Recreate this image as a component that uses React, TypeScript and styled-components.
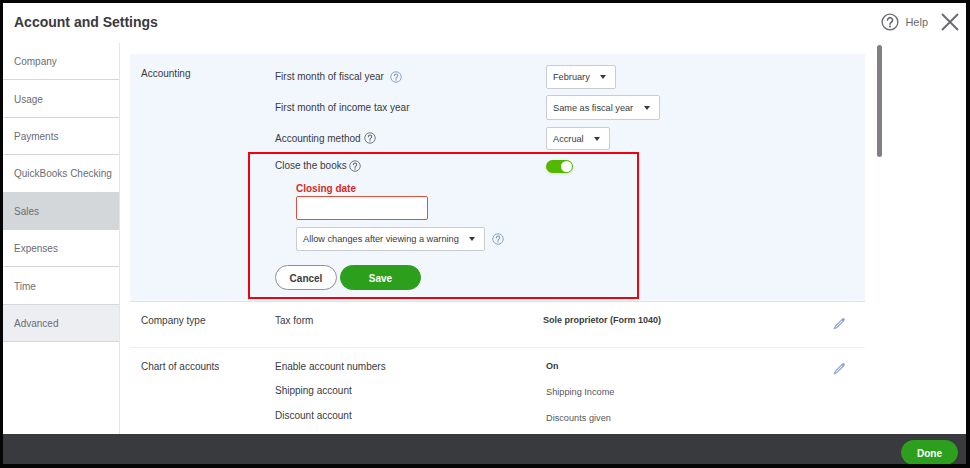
import React from "react";
import styled, { createGlobalStyle } from "styled-components";

const GlobalStyle = createGlobalStyle`
  html, body {
    margin: 0;
    padding: 0;
    background: #000;
  }
  * {
    box-sizing: border-box;
  }
`;

const Frame = styled.div`
  width: 970px;
  height: 468px;
  padding: 3px 4px 4px 3px;
  background: #050505;
  font-family: "Liberation Sans", Arial, sans-serif;
  font-size: 10px;
  color: #393a3d;
`;

const Dialog = styled.div`
  height: 100%;
  display: flex;
  flex-direction: column;
  background: #fff;
`;

const Header = styled.header`
  height: 40px;
  flex: none;
  display: flex;
  align-items: center;
  padding: 0 7px 2px 11px;
`;

const Title = styled.h1`
  margin: 0;
  flex: 1;
  font-size: 14px;
  font-weight: 700;
  color: #393a3d;
`;

const HelpLink = styled.span`
  display: flex;
  align-items: center;
  gap: 6px;
  margin-right: 13px;
  font-size: 11px;
  color: #6b6c72;
`;

const Body = styled.div`
  flex: 1;
  min-height: 0;
  display: flex;
  overflow: hidden;
`;

const Sidebar = styled.nav`
  width: 117px;
  flex: none;
  border-right: 1px solid #e3e5e8;
`;

const NavItem = styled.div<{ $bg?: string }>`
  height: 37.4px;
  display: flex;
  align-items: center;
  padding: 1px 0 0 11px;
  font-size: 10px;
  color: #6b6c72;
  background: ${(p) => p.$bg ?? "#fff"};
  border-bottom: 1px solid #d4d7dc;
`;

const Main = styled.main`
  width: 745px;
  flex: none;
  padding: 11px 0 0 10px;
`;

const Section = styled.section<{ $height: number; $active?: boolean }>`
  height: ${(p) => p.$height}px;
  display: grid;
  grid-template-columns: 134px 1fr;
  padding: ${(p) => (p.$active ? "0" : "12px")} 0 0 11px;
  background: ${(p) => (p.$active ? "#f2f6fd" : "#fff")};
  border-bottom: 1px solid ${(p) => (p.$active ? "#dfe3ea" : "#eeeff1")};
`;

const SectionLabel = styled.div<{ $top?: number }>`
  font-size: 10px;
  line-height: 14px;
  padding-top: ${(p) => p.$top ?? 0}px;
`;

const Rows = styled.div`
  display: flex;
  flex-direction: column;
  padding-top: 11px;
`;

const SettingRow = styled.div<{ $height: number; $gap?: number }>`
  height: ${(p) => p.$height}px;
  margin-bottom: ${(p) => p.$gap ?? 0}px;
  display: grid;
  grid-template-columns: 271px 1fr;
  align-items: center;
`;

const RowLabel = styled.span<{ $gap?: number }>`
  display: flex;
  align-items: center;
  gap: ${(p) => p.$gap ?? 6}px;
  padding-bottom: 1px;
  font-size: 10px;
  color: #393a3d;
`;

const Select = styled.div<{ $width: number; $height?: number }>`
  width: ${(p) => p.$width}px;
  height: ${(p) => p.$height ?? 24}px;
  display: flex;
  align-items: center;
  justify-content: space-between;
  padding: 0 9.5px 0 6px;
  background: #fff;
  border: 1px solid #c9ccd1;
  border-radius: 2px;
  font-size: 9.2px;
  white-space: nowrap;
  color: #393a3d;
  &::after {
    content: "";
    border-left: 3px solid transparent;
    border-right: 3px solid transparent;
    border-top: 4px solid #393a3d;
  }
`;

const Highlight = styled.div`
  width: 391px;
  height: 147px;
  margin: 2px 0 0 -27px;
  padding: 0 0 0 25px;
  border: 2px solid #f5000f;
`;

const Toggle = styled.span`
  width: 27px;
  height: 13px;
  display: block;
  position: relative;
  background: #53b700;
  border-radius: 7px;
  box-shadow: 0 1px 3px rgba(0, 0, 0, 0.12);
  &::after {
    content: "";
    position: absolute;
    top: 1px;
    right: 1px;
    width: 11px;
    height: 11px;
    background: #fff;
    border-radius: 50%;
  }
`;

const DateBlock = styled.div`
  padding-left: 21px;
`;

const FieldLabel = styled.div`
  height: 14px;
  margin-top: 4px;
  line-height: 14px;
  font-size: 10px;
  font-weight: 700;
  color: #d52b1e;
`;

const DateInput = styled.div`
  width: 132px;
  height: 24px;
  background: #fff;
  border: 1px solid #e0503f;
  border-radius: 2px;
`;

const WarnRow = styled.div`
  display: flex;
  align-items: center;
  gap: 7px;
  margin-top: 7px;
`;

const Actions = styled.div`
  display: flex;
  gap: 3px;
  margin-top: 14px;
`;

const PillButton = styled.button<{ $primary?: boolean; $width: number }>`
  width: ${(p) => p.$width}px;
  height: 25px;
  padding: 1px 0 0;
  font-family: inherit;
  font-size: 10px;
  font-weight: 700;
  border-radius: 13px;
  color: ${(p) => (p.$primary ? "#fff" : "#393a3d")};
  background: ${(p) => (p.$primary ? "#2ca01c" : "#fff")};
  border: 1px solid ${(p) => (p.$primary ? "#2ca01c" : "#8d9096")};
`;

const InfoGrid = styled.div<{ $rows: string }>`
  display: grid;
  grid-template-columns: 271px 1fr 32px;
  grid-template-rows: ${(p) => p.$rows};
  align-items: start;
`;

const InfoText = styled.span`
  font-size: 10px;
  line-height: 14px;
  color: #393a3d;
`;

const InfoValue = styled.span<{ $strong?: boolean; $shift?: number; $drop?: number }>`
  margin-left: ${(p) => p.$shift ?? 0}px;
  margin-top: ${(p) => p.$drop ?? 0}px;
  font-size: ${(p) => (p.$strong ? "9px" : "9.2px")};
  line-height: 14px;
  font-weight: ${(p) => (p.$strong ? 700 : 400)};
  color: ${(p) => (p.$strong ? "#393a3d" : "#55565a")};
`;

const EditCell = styled.span<{ $top: number }>`
  line-height: 0;
  padding-top: ${(p) => p.$top}px;
`;

const ScrollThumb = styled.div`
  width: 5px;
  height: 112px;
  flex: none;
  margin: 2px 0 0 12px;
  background: #808080;
  border-radius: 3px;
`;

const Footer = styled.footer`
  height: 30px;
  flex: none;
  display: flex;
  justify-content: flex-end;
  padding: 6px 8px 0 0;
  background: #393a3d;
  overflow: hidden;
`;

const DoneButton = styled(PillButton)`
  flex: none;
`;

function HelpIcon({ size = 12, color = "#6b6c72" }: { size?: number; color?: string }) {
  return (
    <svg width={size} height={size} viewBox="0 0 24 24" fill="none">
      <circle cx="12" cy="12" r="10.5" stroke={color} strokeWidth="1.8" />
      <path
        d="M8.8 9.5a3.3 3.3 0 1 1 5 2.8c-1.2.7-1.8 1.3-1.8 2.7"
        stroke={color}
        strokeWidth="2.2"
        strokeLinecap="round"
      />
      <circle cx="12" cy="18" r="1.4" fill={color} />
    </svg>
  );
}

function CloseIcon() {
  return (
    <svg width="18" height="18" viewBox="0 0 18 18" fill="none">
      <path d="M1 1l16 16M17 1L1 17" stroke="#6b6c72" strokeWidth="2" />
    </svg>
  );
}

function PencilIcon() {
  return (
    <svg width="13" height="13" viewBox="0 0 13 13" fill="none">
      <path
        d="M9 2.6L2.6 9 1.2 11.8 4 10.4 10.4 4z"
        stroke="#8aa3dc"
        strokeWidth="1.1"
        strokeLinejoin="round"
      />
      <path d="M9.4 1.6a1.3 1.3 0 0 1 2 2L10.4 4.6 8.4 2.6z" fill="#8aa3dc" />
    </svg>
  );
}

const navItems: { label: string; bg?: string }[] = [
  { label: "Company" },
  { label: "Usage" },
  { label: "Payments" },
  { label: "QuickBooks Checking" },
  { label: "Sales", bg: "#d4d7da" },
  { label: "Expenses" },
  { label: "Time" },
  { label: "Advanced", bg: "#eceef1" },
];

export default function App() {
  return (
    <Frame>
      <GlobalStyle />
      <Dialog>
        <Header>
          <Title>Account and Settings</Title>
          <HelpLink>
            <HelpIcon size={18} />
            Help
          </HelpLink>
          <CloseIcon />
        </Header>

        <Body>
          <Sidebar>
            {navItems.map((item) => (
              <NavItem key={item.label} $bg={item.bg}>
                {item.label}
              </NavItem>
            ))}
          </Sidebar>

          <Main>
            <Section $height={248} $active>
              <SectionLabel $top={13}>Accounting</SectionLabel>
              <Rows>
                <SettingRow $height={24} $gap={6}>
                  <RowLabel>
                    First month of fiscal year <HelpIcon color="#7f9cc0" />
                  </RowLabel>
                  <Select $width={70}>February</Select>
                </SettingRow>
                <SettingRow $height={25} $gap={7}>
                  <RowLabel>First month of income tax year</RowLabel>
                  <Select $width={114} $height={25}>
                    Same as fiscal year
                  </Select>
                </SettingRow>
                <SettingRow $height={23}>
                  <RowLabel $gap={3}>
                    Accounting method <HelpIcon />
                  </RowLabel>
                  <Select $width={64} $height={23}>
                    Accrual
                  </Select>
                </SettingRow>
                <Highlight>
                  <SettingRow $height={24}>
                    <RowLabel $gap={2}>
                      Close the books <HelpIcon />
                    </RowLabel>
                    <Toggle />
                  </SettingRow>
                  <DateBlock>
                    <FieldLabel>Closing date</FieldLabel>
                    <DateInput />
                    <WarnRow>
                      <Select $width={189}>Allow changes after viewing a warning</Select>
                      <HelpIcon color="#7f9cc0" />
                    </WarnRow>
                  </DateBlock>
                  <Actions>
                    <PillButton $width={62}>Cancel</PillButton>
                    <PillButton $width={81} $primary>
                      Save
                    </PillButton>
                  </Actions>
                </Highlight>
              </Rows>
            </Section>

            <Section $height={46}>
              <SectionLabel>Company type</SectionLabel>
              <InfoGrid $rows="24px">
                <InfoText>Tax form</InfoText>
                <InfoValue $strong $shift={-3} $drop={-1}>
                  Sole proprietor (Form 1040)
                </InfoValue>
                <EditCell $top={3}>
                  <PencilIcon />
                </EditCell>
              </InfoGrid>
            </Section>

            <Section $height={90}>
              <SectionLabel>Chart of accounts</SectionLabel>
              <InfoGrid $rows="24px 25px 14px">
                <InfoText>Enable account numbers</InfoText>
                <InfoValue $strong $drop={-1}>
                  On
                </InfoValue>
                <EditCell $top={2}>
                  <PencilIcon />
                </EditCell>
                <InfoText>Shipping account</InfoText>
                <InfoValue $drop={1}>Shipping Income</InfoValue>
                <span />
                <InfoText>Discount account</InfoText>
                <InfoValue $drop={2}>Discounts given</InfoValue>
              </InfoGrid>
            </Section>
          </Main>

          <ScrollThumb />
        </Body>

        <Footer>
          <DoneButton $width={57} $primary>
            Done
          </DoneButton>
        </Footer>
      </Dialog>
    </Frame>
  );
}
